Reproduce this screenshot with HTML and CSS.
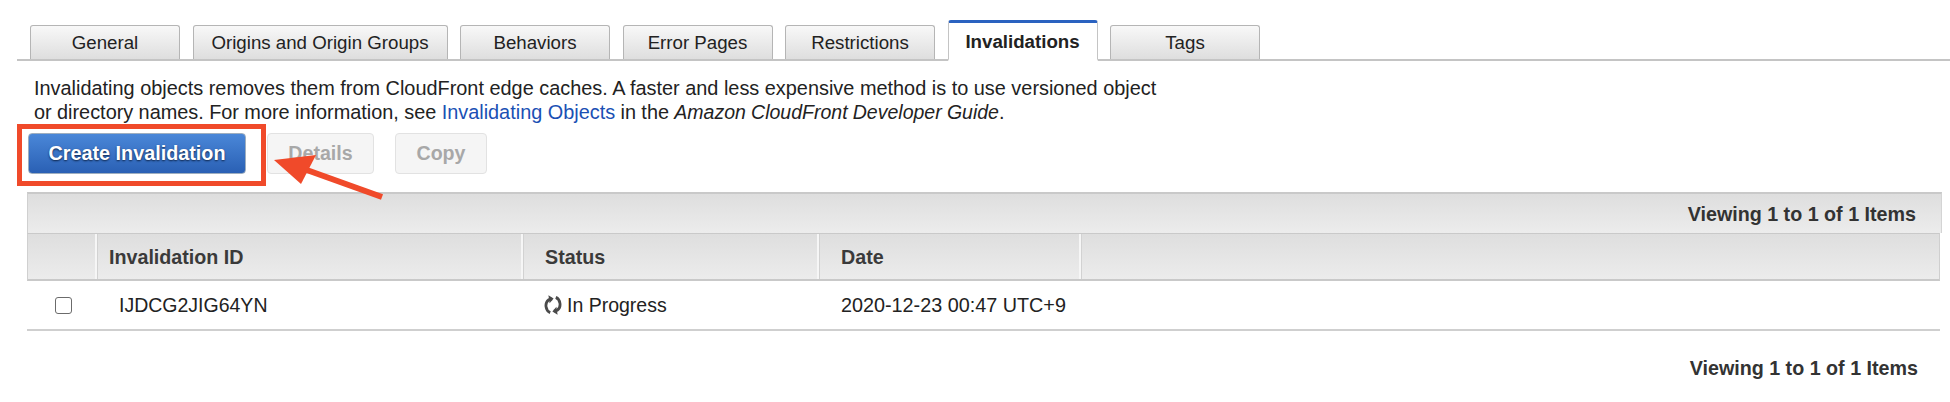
FILE: index.html
```html
<!DOCTYPE html>
<html lang="en">
<head>
<meta charset="utf-8">
<title>Invalidations</title>
<link rel="stylesheet" href="styles.css">
</head>
<body>
<nav class="tabs">
  <a class="tab">General</a>
  <a class="tab tab-wide">Origins and Origin Groups</a>
  <a class="tab">Behaviors</a>
  <a class="tab">Error Pages</a>
  <a class="tab">Restrictions</a>
  <a class="tab tab-active">Invalidations</a>
  <a class="tab">Tags</a>
</nav>
<main class="content">
  <p class="intro"><span class="intro-line">Invalidating objects removes them from CloudFront edge caches. A faster and less expensive method is to use versioned object</span><span class="intro-line intro-tight">or directory names. For more information, see <a class="link">Invalidating Objects</a> in the <em class="guide">Amazon CloudFront Developer Guide</em>.</span></p>
  <div class="actions">
    <button class="btn btn-primary">Create Invalidation</button>
    <button class="btn btn-details">Details</button>
    <button class="btn btn-copy">Copy</button>
  </div>
  <section class="table">
    <div class="pager pager-top">Viewing 1 to 1 of 1 Items</div>
    <div class="row row-head">
      <div class="cell"></div>
      <div class="cell">Invalidation ID</div>
      <div class="cell">Status</div>
      <div class="cell">Date</div>
      <div class="cell cell-last"></div>
    </div>
    <div class="row row-body">
      <div class="cell cell-check"><span class="checkbox"></span></div>
      <div class="cell cell-id">IJDCG2JIG64YN</div>
      <div class="cell cell-status">
        <svg class="spin" viewBox="0 0 18 20" width="18" height="20" aria-hidden="true">
          <path class="spin-line" d="M6.2 17.6 C1.4 15.6 0.4 8 4.6 4.8 L8 3.8"/>
          <path class="spin-head" d="M4.4 0.2 L9.6 3.4 L5.6 8.2 Z"/>
          <path class="spin-line" d="M11.8 2.4 C16.6 4.4 17.6 12 13.4 15.2 L10 16.2"/>
          <path class="spin-head" d="M13.6 19.8 L8.4 16.6 L12.4 11.8 Z"/>
        </svg>
        <span>In Progress</span>
      </div>
      <div class="cell cell-date">2020-12-23 00:47 UTC+9</div>
      <div class="cell"></div>
    </div>
    <div class="pager pager-bottom">Viewing 1 to 1 of 1 Items</div>
  </section>
</main>
<div class="callout-box"></div>
<svg class="callout-arrow" viewBox="0 0 130 60" width="130" height="60" aria-hidden="true">
  <path class="arrow-line" d="M110 42 L32 14"/>
  <path class="arrow-head" d="M2 5 L44 0 L29 29 Z"/>
</svg>
</body>
</html>
```
FILE: styles.css
```css
* { box-sizing: border-box; }
html, body { margin: 0; padding: 0; }
body {
  width: 1950px;
  height: 402px;
  overflow: hidden;
  background: #fff;
  color: #222;
  font-family: "Liberation Sans", Arial, sans-serif;
  font-size: 19.8px;
  position: relative;
}
.tabs {
  display: flex;
  align-items: flex-end;
  gap: 12.5px;
  height: 61px;
  margin-left: 17px;
  padding-left: 13px;
  border-bottom: 2px solid #c4c4c4;
  font-size: 18.7px;
}
.tab {
  width: 150px;
  height: 34px;
  display: flex;
  align-items: center;
  justify-content: center;
  background: linear-gradient(#f8f8f8, #dedede);
  border: 1px solid #b5b5b5;
  border-bottom: 0;
  border-radius: 3px 3px 0 0;
  color: #222;
}
.tab-wide { width: 255px; }
.tab-active {
  height: 41px;
  margin-bottom: -2px;
  background: #fff;
  border-color: #c4c4c4;
  border-top: 3px solid #2a62c0;
  border-bottom: 2px solid #fff;
  font-weight: 700;
  padding-top: 2px;
}
.content { padding: 15px 8px 0 27px; }
.intro {
  margin: 0 0 0 7px;
  line-height: 24px;
  font-size: 19.9px;
  color: #222;
}
.intro-line { display: block; white-space: nowrap; }
.intro-tight { word-spacing: -0.2px; }
.link { color: #1a50b4; word-spacing: 0; }
.guide { font-size: 19.5px; }
.actions {
  display: flex;
  gap: 22px;
  margin-top: 9px;
  margin-left: 1px;
  height: 41px;
}
.btn {
  font: 700 19.6px "Liberation Sans", Arial, sans-serif;
  border-radius: 4px;
  height: 41px;
  padding: 0;
  background: #f5f5f5;
  border: 1px solid #e2e2e2;
  color: #a8a8a8;
}
.btn-primary {
  width: 218px;
  font-size: 19.8px;
  background: linear-gradient(#4a87d8, #2a60b4);
  border: 1px solid #9eaebf;
  color: #fff;
  text-shadow: 0 1px 2px #0d2347;
}
.btn-details { width: 107px; margin-left: -1px; }
.btn-copy { width: 92px; margin-left: -1px; }
.table { margin-top: 18px; width: 1915px; }
.pager {
  text-align: right;
  font-weight: 700;
  font-size: 19.7px;
  color: #333;
}
.pager-top {
  height: 41px;
  line-height: 41px;
  padding-right: 25px;
  background: linear-gradient(#dedede, #ececec);
  border-top: 2px solid #c9c9c9;
  border-right: 1px solid #d4d4d4;
  border-left: 1px solid #d0d0d0;
}
.pager-bottom {
  margin-top: 25px;
  line-height: 24px;
  padding-right: 24px;
}
.row {
  display: grid;
  grid-template-columns: 69px 426px 296px 262px 1fr;
  width: 1913px;
  align-items: stretch;
}
.row-head {
  height: 48px;
  background: linear-gradient(#dedede, #ececec);
  border-top: 1px solid #c9c9c9;
  border-bottom: 2px solid #c9c9c9;
  border-left: 1px solid #d0d0d0;
  border-right: 1px solid #cfcfcf;
  font-weight: 700;
  font-size: 19.7px;
  color: #3a3a3a;
}
.row-head .cell {
  display: flex;
  align-items: center;
  padding-left: 12px;
  padding-top: 2px;
  border-right: 2px solid #f6f6f6;
  box-shadow: 1px 0 0 #d2d2d2 inset;
}
.row-head .cell:nth-child(1) { box-shadow: none; border-right: 2px solid #f6f6f6; }
.row-head .cell:nth-child(3), .row-head .cell:nth-child(4) { padding-left: 22px; }
.row-head .cell-last { border-right: 0; }
.row-body {
  height: 50px;
  border-bottom: 2px solid #cfcfcf;
  width: 1913px;
  color: #222;
}
.row-body .cell { display: flex; align-items: center; }
.cell-check { padding-left: 28px; }
.checkbox {
  width: 17px;
  height: 17px;
  border: 1px solid #6b6b6b;
  border-radius: 3px;
  background: #fff;
}
.cell-id { padding-left: 23px; font-size: 19.5px; }
.cell-status { padding-left: 22px; gap: 5px; font-size: 19.5px; }
.cell-date { padding-left: 23px; }
.spin { flex: none; }
.spin-line { fill: none; stroke: #4a4a4a; stroke-width: 2.8; }
.spin-head { fill: #4a4a4a; }
.callout-box {
  position: absolute;
  left: 17px;
  top: 124px;
  width: 249px;
  height: 62px;
  border: 5px solid #f04a2a;
}
.callout-arrow {
  position: absolute;
  left: 272px;
  top: 155px;
}
.arrow-line { fill: none; stroke: #f04a2a; stroke-width: 6; }
.arrow-head { fill: #f04a2a; }
```
